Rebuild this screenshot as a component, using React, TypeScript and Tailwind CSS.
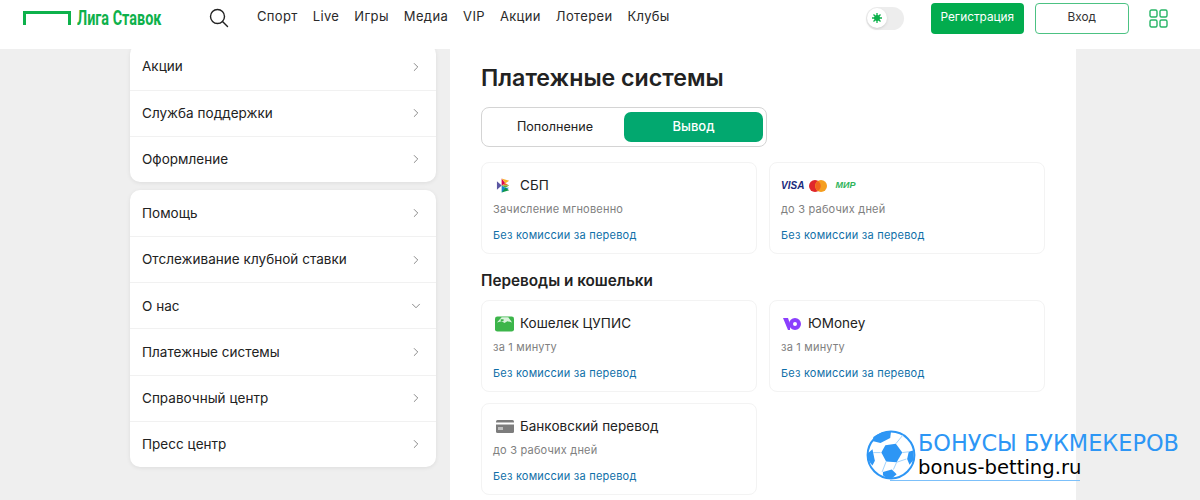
import { ChevronDown, ChevronRight } from 'lucide-react';

const navItems = ['Спорт', 'Live', 'Игры', 'Медиа', 'VIP', 'Акции', 'Лотереи', 'Клубы'];
const menuTop = ['Акции', 'Служба поддержки', 'Оформление'];
const menuBottom = ['Помощь', 'Отслеживание клубной ставки', 'О нас', 'Платежные системы', 'Справочный центр', 'Пресс центр'];

function SbpIcon() {
  return (
    <svg width="16" height="17" viewBox="0 0 17 17" className="ml-[3px] mr-[1px] shrink-0">
      <path d="M1 4l5 4.500-5 4.500z" fill="#5b57a2" />
      <path d="M6 8.500l4-2.500-4-5z" fill="#d90751" />
      <path d="M6 1l8 2.500-4 2.500z" fill="#f9b229" />
      <path d="M6 8.500l4-2.500 4 2.500z" fill="#ed6f26" />
      <path d="M6 8.500l4 2.500 4-2.500z" fill="#63b22f" />
      <path d="M6 8.500v7.500l8-5-4 0z" fill="#1487c9" />
      <path d="M6 16l8-2.500-4-2.500z" fill="#0d9647" />
    </svg>
  );
}

function CardsIcon() {
  return (
    <div className="flex items-center gap-[5px]">
      <span className="font-['Liberation_Sans',sans-serif] text-[10px] font-bold italic leading-none text-[#1a2a7c]">VISA</span>
      <svg width="18" height="12" viewBox="0 0 18 12">
        <circle cx="6" cy="6" r="6" fill="#e0262b" />
        <circle cx="12" cy="6" r="6" fill="#f59e1f" />
        <path d="M9 1a6 6 0 0 1 0 10a6 6 0 0 1 0-10z" fill="#f0641e" />
      </svg>
      <span className="ml-[3px] font-['Liberation_Sans',sans-serif] text-[9px] font-bold italic leading-none text-[#2fb45a]">МИР</span>
    </div>
  );
}

function WalletIcon() {
  return (
    <svg width="19" height="16" viewBox="0 0 20 16" className="ml-[2px] mr-[-1px] shrink-0">
      <rect x="0" y="0" width="20" height="16" rx="2.500" fill="#3cb54a" />
      <path d="M2 6.500L7 1h7l4 5.500-5-1.500-3 2-3-2z" fill="#d9f2dc" />
      <path d="M6 3h3v2H6z" fill="#3cb54a" />
    </svg>
  );
}

function YooIcon() {
  return (
    <svg width="18" height="12" viewBox="0 0 18 12" className="ml-[2px] shrink-0">
      <path d="M0 0h5l2 6v6H5z" fill="#8b3ffd" />
      <circle cx="12" cy="6" r="4" fill="none" stroke="#8b3ffd" strokeWidth="4" />
    </svg>
  );
}

function BankIcon() {
  return (
    <svg width="18" height="13" viewBox="0 0 18 13" className="ml-[3px] mr-[-1px] shrink-0">
      <rect x="0" y="0" width="18" height="13" rx="1.500" fill="#7c7c7c" />
      <rect x="0" y="2.500" width="18" height="2" fill="#ffffff" />
      <rect x="2" y="7" width="5" height="3" fill="#ffffff" opacity="0.5" />
    </svg>
  );
}

function Ball() {
  return (
    <svg width="50" height="50" viewBox="0 0 62 62" className="shrink-0">
      <circle cx="31" cy="31" r="29" fill="#ffffff" stroke="#2d96f5" strokeWidth="2.500" />
      <path d="M24 19l13-2 8 11-7 12-13-1-6-11z" fill="#2d96f5" />
      <path d="M9 9C13 5 24 1 31 2l-1 8-12 6-9-2z" fill="#2d96f5" />
      <path d="M2 29l6-5 3 14-3 6C4 40 2 35 2 29z" fill="#2d96f5" />
      <path d="M21 52l11-3 6 6-6 5c-4 0-8-1-11-4z" fill="#2d96f5" />
      <path d="M53 27l6-2v12l-5 6-3-7z" fill="#2d96f5" />
      <path d="M37 17l9-11M45 28l8-1M38 40l12-4M25 39l-5 13M18 28H9M38 40l-4 9" stroke="#9fd0fb" strokeWidth="1.200" fill="none" />
    </svg>
  );
}

function MenuCard({ items, className }: { items: string[]; className: string }) {
  return (
    <div className={`w-[306px] rounded-[10px] bg-white shadow-[0_1px_4px_rgba(0,0,0,0.08)] ${className}`}>
      {items.map((item, i) => (
        <div
          key={item}
          className={`flex h-[46.200px] items-center justify-between pl-3 pr-[13px] text-[13.500px] tracking-[0.03px] text-[#222] ${i > 0 ? 'border-t border-[#f1f1f1]' : ''}`}
        >
          <span>{item}</span>
          {item === 'О нас' ? (
            <ChevronDown size={14} strokeWidth={1.300} className="text-[#666]" />
          ) : (
            <ChevronRight size={14} strokeWidth={1.300} className="text-[#666]" />
          )}
        </div>
      ))}
    </div>
  );
}

function PayCard({ icon, title, sub }: { icon: React.ReactNode; title?: string; sub: string }) {
  return (
    <div className="flex h-[92px] flex-col rounded-[8px] border border-[#f3f3f3] bg-white pl-[11px] pt-[13px]">
      <div className="flex h-[19px] items-center gap-[7px] text-[13.500px] tracking-[0.03px] text-[#222]">
        {icon}
        {title && <span>{title}</span>}
      </div>
      <div className="mt-[5px] text-[11px] leading-[18px] tracking-[0.2px] text-[#808080]">{sub}</div>
      <div className="mt-[8px] text-[11px] leading-[18px] tracking-[0.22px] text-[#0f6fa8]">Без комиссии за перевод</div>
    </div>
  );
}

export default function App() {
  return (
    <div className="relative h-[500px] w-[1200px] overflow-hidden bg-[#efefef] font-['Inter',sans-serif]">
      {/* Шапка */}
      <div className="relative z-10 flex h-[49px] items-center bg-white pb-[13px]">
        <div className="ml-[23px] -mt-[1px] flex items-end">
          <div className="h-[14px] w-[48px] shrink-0 border-x-[3px] border-t-[3px] border-[#0db14b]" />
          <span className="ml-[6px] w-[90px] origin-left scale-x-[0.72] whitespace-nowrap font-['Roboto',sans-serif] text-[20px] font-bold leading-[14px] text-[#0db14b]">
            Лига Ставок
          </span>
        </div>
        <svg width="20" height="20" viewBox="0 0 20 20" className="ml-[42px] -mt-[1px]" fill="none" stroke="#222" strokeWidth="1.400">
          <circle cx="8.500" cy="8.500" r="7" />
          <path d="M13.500 13.500l5 5" strokeLinecap="round" />
        </svg>
        <nav className="ml-[28px] -mt-[2px] flex gap-[15px] text-[13px] tracking-[0.35px] text-[#2a2a2a]">
          {navItems.map((item) => (
            <span key={item}>{item}</span>
          ))}
        </nav>
        <div className="ml-[196px] flex h-[23px] w-[38px] items-center rounded-full bg-[#ededed] pl-[1px]">
          <div className="flex h-[20px] w-[20px] items-center justify-center rounded-full bg-white shadow-sm">
            <svg width="10" height="10" viewBox="0 0 10 10" fill="none" stroke="#0db14b" strokeWidth="1.300">
              <circle cx="5" cy="5" r="2.300" fill="#0db14b" />
              <path d="M5 0v10M0 5h10M1.500 1.500l7 7M8.500 1.500l-7 7" />
            </svg>
          </div>
        </div>
        <button className="ml-[27px] h-[31px] w-[93px] rounded-[4px] bg-[#02ac4e] text-[11.800px] text-white">Регистрация</button>
        <button className="ml-[11px] h-[31px] w-[94px] rounded-[4px] border border-[#4cc283] bg-white text-[11.800px] text-[#333]">Вход</button>
        <svg width="19" height="19" viewBox="0 0 19 19" className="ml-[20px]" fill="none" stroke="#27b566" strokeWidth="1.400">
          <rect x="1" y="1" width="7" height="7" rx="1.500" />
          <rect x="11" y="1" width="7" height="7" rx="1.500" />
          <rect x="1" y="11" width="7" height="7" rx="1.500" />
          <rect x="11" y="11" width="7" height="7" rx="1.500" />
        </svg>
      </div>

      <div className="flex pl-[130px]">
        {/* Левое меню */}
        <div className="flex w-[306px] shrink-0 flex-col gap-[7.700px]">
          <MenuCard items={menuTop} className="-mt-[5.500px]" />
          <MenuCard items={menuBottom} className="" />
        </div>

        {/* Контент */}
        <div className="ml-[14px] h-[451px] w-[626px] bg-white px-[31px] pt-[13px]">
          <h1 className="text-[23.200px] font-semibold leading-[32px] text-[#222]">Платежные системы</h1>
          <div className="mt-[13px] flex h-[40px] w-[286px] items-center justify-between rounded-[8px] border border-[#d4d4d4] pl-[1px] pr-[3px] text-[13px]">
            <span className="w-[141px] pl-[3px] text-center text-[12.600px] text-[#222]">Пополнение</span>
            <span className="flex h-[30px] w-[139px] shrink-0 items-center justify-center rounded-[7px] bg-[#02a86f] font-medium text-white">Вывод</span>
          </div>
          <div className="mt-[15px] grid grid-cols-2 gap-3">
            <PayCard icon={<SbpIcon />} title="СБП" sub="Зачисление мгновенно" />
            <PayCard icon={<CardsIcon />} sub="до 3 рабочих дней" />
          </div>
          <h2 className="mt-[17px] text-[15.300px] font-semibold leading-[20px] text-[#222]">Переводы и кошельки</h2>
          <div className="mt-[9px] grid grid-cols-2 gap-x-3 gap-y-[11px]">
            <PayCard icon={<WalletIcon />} title="Кошелек ЦУПИС" sub="за 1 минуту" />
            <PayCard icon={<YooIcon />} title="ЮMoney" sub="за 1 минуту" />
            <PayCard icon={<BankIcon />} title="Банковский перевод" sub="до 3 рабочих дней" />
          </div>
        </div>
      </div>

      {/* Водяной знак */}
      <div className="absolute left-[866px] top-[430px] z-20 flex items-start">
        <Ball />
        <div className="ml-[2px]">
          <div className="whitespace-nowrap font-['DejaVu_Sans',sans-serif] text-[22.400px] leading-[26px] text-[#2d96f5]">БОНУСЫ БУКМЕКЕРОВ</div>
          <div className="w-[164px] whitespace-nowrap font-['DejaVu_Sans',sans-serif] text-[19.600px] leading-[24px] text-black">bonus-betting.ru</div>
        </div>
        <div className="absolute left-[24px] top-[50px] h-px w-[190px] bg-[#7cc0fa]" />
      </div>
    </div>
  );
}
